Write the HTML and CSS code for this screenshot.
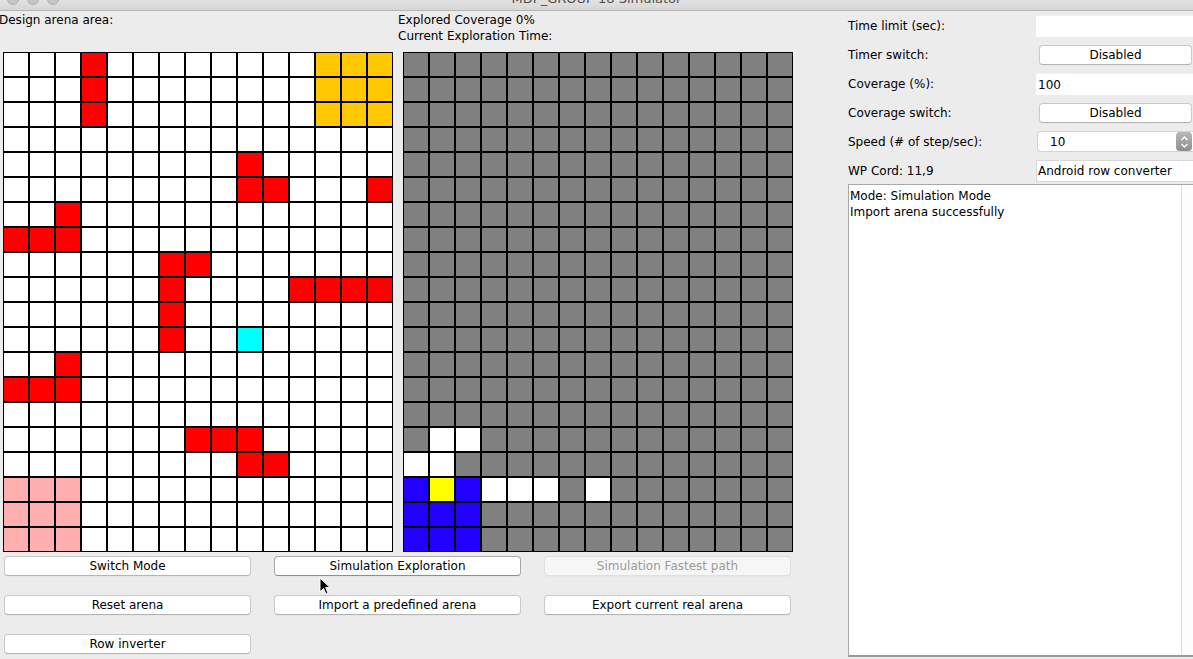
FILE: index.html
```html
<!DOCTYPE html>
<html>
<head>
<meta charset="utf-8">
<title>MDP_GROUP 18 Simulator</title>
<link rel="stylesheet" href="styles.css">
</head>
<body>
<div class="window">
  <div class="titlebar">
    <div class="lights"><span class="light"></span><span class="light"></span><span class="light"></span></div>
    <div class="title">MDP_GROUP 18 Simulator</div>
  </div>
  <div class="main">
    <div class="left">
      <div class="labels">
        <div class="lbl-design">Design arena area:</div>
        <div class="lbl-explore">
          <div>Explored Coverage 0%</div>
          <div>Current Exploration Time:</div>
        </div>
      </div>
      <div class="arenas">
        <div class="grid" id="design"></div>
        <div class="grid" id="explore"></div>
      </div>
      <div class="buttons">
        <button class="btn">Switch Mode</button>
        <button class="btn focused">Simulation Exploration</button>
        <button class="btn disabled">Simulation Fastest path</button>
        <button class="btn">Reset arena</button>
        <button class="btn">Import a predefined arena</button>
        <button class="btn">Export current real arena</button>
        <button class="btn">Row inverter</button>
      </div>
    </div>
    <div class="right">
      <div class="row-label">Time limit (sec):</div>
      <div class="field"></div>
      <div class="row-label">Timer switch:</div>
      <div class="btn-wrap"><button class="btn side">Disabled</button></div>
      <div class="row-label">Coverage (%):</div>
      <div class="field">100</div>
      <div class="row-label">Coverage switch:</div>
      <div class="btn-wrap"><button class="btn side">Disabled</button></div>
      <div class="row-label">Speed (# of step/sec):</div>
      <div class="spinner">
        <span class="spin-val">10</span>
        <span class="spin-arrows">
          <svg width="9" height="14" viewBox="0 0 9 14"><path d="M1.5 5 L4.5 2 L7.5 5 M1.5 9 L4.5 12 L7.5 9" fill="none" stroke="#fff" stroke-width="1.4"/></svg>
        </span>
      </div>
      <div class="row-label">WP Cord: 11,9</div>
      <div class="field bordered">Android row converter</div>
      <div class="log">
        <div class="log-text">Mode: Simulation Mode<br>Import arena successfully</div>
        <div class="log-scroll"></div>
      </div>
    </div>
  </div>
  <svg class="cursor" width="12" height="19" viewBox="0 0 12 19"><path d="M1 1 L1 15 L4.5 11.5 L7 17 L9 16 L6.6 10.6 L11 10.6 Z" fill="#000" stroke="#fff" stroke-width="1"/></svg>
</div>
<script src="script.js"></script>
</body>
</html>
```

FILE: styles.css
```css
html, body {
  margin: 0;
  padding: 0;
}
body {
  background: #ececec;
  font-family: "DejaVu Sans", "Liberation Sans", sans-serif;
  font-size: 12px;
  color: #000;
  width: 1193px;
  height: 659px;
  overflow: hidden;
}
.window {
  position: relative;
  width: 1193px;
  height: 659px;
}
.titlebar {
  height: 10px;
  border-bottom: 1px solid #b4b4b4;
  background: linear-gradient(#e2e2e2, #d6d6d6);
  position: relative;
  overflow: hidden;
}
.lights {
  display: flex;
  gap: 8px;
  padding-left: 7px;
  margin-top: -7px;
}
.light {
  width: 12px;
  height: 12px;
  border-radius: 50%;
  background: #c6c6c6;
  border: 1px solid #b0b0b0;
  box-sizing: border-box;
}
.title {
  position: absolute;
  left: 0;
  right: 0;
  top: -9px;
  text-align: center;
  font-size: 13px;
  color: #4d4d4d;
}
.main {
  display: flex;
}
.left {
  width: 840px;
  flex: none;
}
.labels {
  display: flex;
  line-height: 16px;
  padding-top: 1px;
  height: 31px;
}
.lbl-design {
  width: 399px;
  margin-left: -1px;
  flex: none;
}
.arenas {
  display: flex;
  gap: 10px;
  padding-left: 3px;
  margin-top: 9px;
}
.grid {
  display: grid;
  grid-template-columns: repeat(15, 26px);
  grid-template-rows: repeat(20, 25px);
  width: 390px;
  height: 500px;
}
.cell {
  box-sizing: border-box;
  border: 1px solid #000;
  background: #fff;
}
.c-R { background: #ff0000; }
.c-O { background: #ffc800; }
.c-P { background: #ffafaf; }
.c-C { background: #00ffff; }
.c-G { background: #808080; }
.c-B { background: #2200ff; }
.c-Y { background: #ffff00; }
.c-W { background: #ffffff; }

.buttons {
  display: grid;
  grid-template-columns: repeat(3, 247px);
  grid-auto-rows: 20px;
  column-gap: 23px;
  row-gap: 19px;
  padding-left: 4px;
  margin-top: 4px;
}
.btn {
  font-family: "DejaVu Sans", "Liberation Sans", sans-serif;
  font-size: 12px;
  color: #000;
  background: #fff;
  border: 1px solid #cacaca;
  border-bottom-color: #b4b4b4;
  border-radius: 4px;
  height: 20px;
  padding: 0;
  margin: 0;
  line-height: 18px;
  text-align: center;
  box-shadow: 0 0.5px 0 rgba(0,0,0,0.05);
}
.btn.focused {
  border-color: #a8a8a8;
  border-bottom-color: #8e8e8e;
}
.btn.disabled {
  background: #f6f6f6;
  color: #9b9b9b;
  border-color: #e0e0e0;
}
.right {
  width: 345px;
  margin-left: 8px;
  display: grid;
  grid-template-columns: 188px 157px;
  grid-auto-rows: 29px;
  align-items: center;
}
.row-label {
  line-height: 16px;
}
.field {
  background: #fff;
  height: 22px;
  line-height: 22px;
  box-sizing: border-box;
  padding-left: 2px;
  border-top: 1px solid #f0f0f0;
}
.field.bordered {
  border: 1px solid #d8d8d8;
  border-right: none;
  line-height: 20px;
  padding-left: 1px;
}
.btn-wrap {
  padding-left: 3px;
  padding-right: 1px;
}
.btn.side {
  width: 100%;
  display: block;
}
.spinner {
  margin-left: 1px;
  height: 21px;
  background: #fff;
  border: 1px solid #d2d2d2;
  border-right: none;
  border-radius: 4px 0 0 4px;
  box-sizing: border-box;
  display: flex;
  align-items: center;
  justify-content: space-between;
}
.spin-val {
  padding-left: 12px;
}
.spin-arrows {
  width: 16px;
  height: 19px;
  margin-right: 1px;
  border-radius: 4px;
  background: linear-gradient(#b8b8b8, #8e8e8e);
  display: flex;
  align-items: center;
  justify-content: center;
}
.log {
  grid-column: 1 / 3;
  align-self: start;
  height: 473px;
  margin-top: -1px;
  background: #fff;
  border-left: 1px solid #a8a8a8;
  border-top: 1px solid #a8a8a8;
  border-bottom: 2px solid #9a9a9a;
  box-sizing: border-box;
  display: flex;
}
.log-text {
  flex: 1;
  padding: 3px 0 0 1px;
  line-height: 16px;
}
.log-scroll {
  width: 11px;
  border-left: 1px solid #dcdcdc;
  background: #fdfdfd;
}
.cursor {
  position: absolute;
  left: 319px;
  top: 577px;
}
```

FILE: script.js
```js
(function () {
  var design = [
    "...R........OOO",
    "...R........OOO",
    "...R........OOO",
    "...............",
    ".........R.....",
    ".........RR...R",
    "..R............",
    "RRR............",
    "......RR.......",
    "......R....RRRR",
    "......R........",
    "......R..C.....",
    "..R............",
    "RRR............",
    "...............",
    ".......RRR.....",
    ".........RR....",
    "PPP............",
    "PPP............",
    "PPP............"
  ];
  var g = "GGGGGGGGGGGGGGG";
  var explore = [g, g, g, g, g, g, g, g, g, g, g, g, g, g, g,
    "GWWGGGGGGGGGGGG",
    "WWGGGGGGGGGGGGG",
    "BYBWWWGWGGGGGGG",
    "BBBGGGGGGGGGGGG",
    "BBBGGGGGGGGGGGG"
  ];
  function fill(id, rows) {
    var el = document.getElementById(id);
    var frag = document.createDocumentFragment();
    rows.forEach(function (row) {
      for (var i = 0; i < row.length; i++) {
        var d = document.createElement("div");
        var ch = row.charAt(i);
        d.className = "cell" + (ch !== "." ? " c-" + ch : "");
        frag.appendChild(d);
      }
    });
    el.appendChild(frag);
  }
  fill("design", design);
  fill("explore", explore);
})();
```
